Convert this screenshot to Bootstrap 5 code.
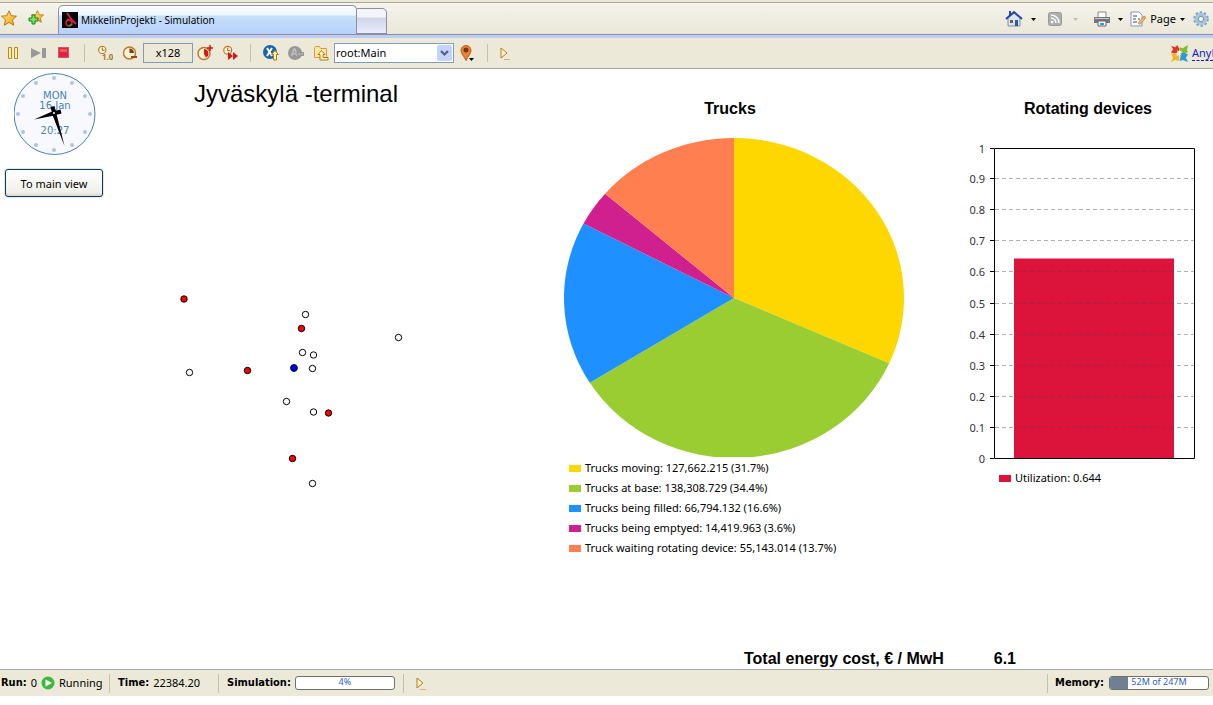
<!DOCTYPE html>
<html lang="en">
<head>
<meta charset="utf-8">
<meta name="viewport" content="width=device-width, initial-scale=1">
<title>MikkelinProjekti - Simulation</title>
<link rel="stylesheet" href="https://cdn.jsdelivr.net/npm/bootstrap@5.3.0/dist/css/bootstrap.min.css">
<style>
body{font-family:"Noto Sans","Liberation Sans",sans-serif;font-size:11px;line-height:14px;color:#000;background:#fff;padding-bottom:9px}
svg{display:block;flex:none}
button,select{font:inherit}
.icon-btn{border:0;background:none;padding:0;flex:none;color:#000}
.tabstrip{height:35px;background:linear-gradient(#ece9d8 2px,#aca899 2px,#aca899 3px,#f6f4ec 3px,#e9e7d8);border-bottom:1px solid #8d909c;overflow:hidden}
.favs{width:58px;height:32px;gap:11px;padding-left:1px;margin-top:2px}
.page-tab{width:299px;height:29px;border:1px solid #8d909c;border-bottom:0;border-radius:5px 5px 0 0;background:linear-gradient(#fbfeff 0,#eaf6fe 9px,#c5dffa 10px,#b8d0fb);padding-left:3px;gap:3px;color:#000;text-decoration:none;font-size:10px}
.blank-tab{width:30px;height:26px;border:1px solid #8d909c;border-left:0;border-radius:0 5px 0 0;background:linear-gradient(#f4f5fb 8px,#cfd6ea 9px,#e9ecfb)}
.blue-rule{height:3px;background:#bdcdf8}
.tools{height:31px;background:#ece9d8;border-bottom:1px solid #a5a5a5;padding-left:6px;overflow:hidden}
.tool-set{gap:9px}
.divider{width:1px;height:18px;background:#c5c2ac;flex:none;margin:0 12px}
.speed{width:50px;height:20px;border:1px solid #7f9db9;background:#ece9d8;text-align:center;padding:0;margin:0 -5px 0 -4px;font-size:11px}
.scope{width:120px;height:20px;margin-left:-4px;margin-right:-4px}
.scope select{appearance:none;width:100%;height:20px;border:1px solid #7f9db9;background:#fff;padding:0 20px 0 1px;border-radius:0;color:#000}
.scope svg{right:2px;top:2px;pointer-events:none}
.brand-link{width:21px;overflow:hidden;white-space:nowrap;color:#1a1ac8;text-decoration:none;border-bottom:1px dashed #1a1ac8;height:15px}
.stage{display:grid;grid-template-columns:110px 454fr 390fr 259fr;grid-template-rows:1fr auto;padding-top:4px}
.clock-face{margin-left:14px}
.xp-btn{width:98px;height:28px;border:1px solid #003c74;border-radius:3px;background:linear-gradient(#fff,#f0f0ea 85%,#dcd8cc);box-shadow:0 0 0 1px #ece9d8;color:#000;margin:14px 0 0 5px;padding:2px 0 0}
h1{font:24px/28px "Liberation Sans",sans-serif;margin:7px 0 0 84px;white-space:nowrap}
h2,.cost{font:bold 16px/20px "Liberation Sans",sans-serif;margin:0}
.site-map{margin:172px 0 0 60px}
.chart-head{padding-top:26px;text-align:center}
.pie-panel{width:340px}
.pie-panel .chart-head{padding-right:8px}
.pie{margin:19px 0 1px}
.pie-panel .legend-list{padding-left:5px}
.bar-panel .chart-head{padding-left:9px}
.bar-chart{margin:23px 0 0 12px}
.bar-panel .legend-list{padding-left:45px}
.legend-list{list-style:none;margin:0;padding:0}
.legend-list li{height:20px;display:flex;align-items:center;gap:4px;white-space:nowrap}
.swatch{width:12px;height:7px;flex:none}
.axis text{font-family:"Noto Sans",sans-serif;font-size:11px;fill:#333;text-anchor:end}
.cost{grid-column:3/5;padding-left:180px;gap:50px}
.statusbar{height:27px;background:#ece9d8;border-top:1px solid #a5a5a5;overflow:hidden;white-space:nowrap}
.status-cell{height:19px;border-right:1px solid #c5c2ac;gap:4px}
.status-cell.even{width:109px}
.status-cell.first-cell{width:110px;padding-left:1px}
.memory{height:19px;border-left:1px solid #c5c2ac;gap:5px;padding:0 4px 0 7px}
.statusbar strong{font-family:"DejaVu Sans Condensed","DejaVu Sans",sans-serif;font-size:11px}
.gauge{width:100px;height:14px;border:1px solid #707070;border-radius:3px;background:#fff;overflow:hidden;position:relative}
.gauge-fill{height:100%;background:#708090}
.gauge-text{position:absolute;inset:0;font-size:9px;line-height:10px;text-align:center;color:#2f62b8}
</style>
</head>
<body class="d-flex flex-column min-vh-100">
<svg width="0" height="0" class="position-absolute" aria-hidden="true">
<defs>
<linearGradient id="gold" x2="1" y2="1"><stop stop-color="#fff08a"/><stop offset="1" stop-color="#f09a10"/></linearGradient>
<symbol id="star" viewBox="0 0 16 16"><path d="M8 .8l2.200 4.900 5.300.5-4 3.600 1.200 5.400L8 12.400l-4.700 2.800 1.200-5.400-4-3.600 5.300-.5z" fill="url(#gold)" stroke="#b87818"/></symbol>
<symbol id="caret" viewBox="0 0 5 3"><path d="M0 0h5L2.500 3z"/></symbol>
<symbol id="console" viewBox="0 0 10 13"><path d="M1 1l6 5-6 5z" fill="#fff4c8" stroke="#b87a20"/><path d="M4.500 12.500h5" stroke="#b87a20" stroke-dasharray="1 1"/></symbol>
<symbol id="dial" viewBox="0 0 16 16"><circle cx="6.500" cy="6" r="4.500" fill="#fff3d0" stroke="#b5772a" stroke-width="1.300"/><path d="M6.500 3v3.500h3" fill="none" stroke="#7c4a20"/></symbol>
</defs>
</svg>

<header>
<div class="tabstrip d-flex">
  <div class="favs d-flex align-items-center">
    <button class="icon-btn" aria-label="Favorites"><svg width="16" height="16"><use href="#star"/></svg></button>
    <button class="icon-btn" aria-label="Add to favorites"><svg width="16" height="16" viewBox="0 0 16 16"><use href="#star" x="3" y="0" width="13" height="13"/><path d="M4 5h3v3h3v3H7v3H4v-3H1V8h3z" fill="#7be05a" stroke="#16851c"/></svg></button>
  </div>
  <a href="#" class="page-tab d-flex align-items-center mt-auto">
    <svg width="16" height="16" viewBox="0 0 16 16"><path d="M0 0h16v16H0z"/><path d="M5 1l5 7 4 4M9 9L5 7" fill="none" stroke="#e0205a" stroke-width="1.800"/><circle cx="7" cy="11" r="3" fill="none" stroke="#d42020" stroke-width="1.500"/><path d="M7 14l3-2" stroke="#30b030" stroke-width="1.500"/></svg>
    <span>MikkelinProjekti - Simulation</span>
  </a>
  <button class="blank-tab mt-auto p-0" aria-label="New tab"></button>
  <nav class="d-flex align-items-center ms-auto pt-1" aria-label="Browser commands">
    <button class="icon-btn d-flex align-items-center" aria-label="Home"><svg width="18" height="18" viewBox="0 0 18 18"><path d="M3 8v8h12V8L9 3z" fill="#dce4ee" stroke="#8090a8"/><path d="M1 9l8-7 8 7" fill="none" stroke="#2448a8" stroke-width="2"/><path d="M4 1h2v4H4z" fill="#2448a8"/><path d="M10 10h3v6h-3z" fill="#245cb0"/><path d="M5 10h3v3H5z" fill="#805848"/></svg><svg class="ms-2" width="5" height="3"><use href="#caret"/></svg></button>
    <button class="icon-btn d-flex align-items-center ms-2 ps-1" aria-label="Feeds"><svg width="14" height="14" viewBox="0 0 14 14"><rect x=".5" y=".5" width="13" height="13" rx="2" fill="#aeaead" stroke="#9a9a98"/><circle cx="4" cy="10" r="1.300" fill="#fff"/><path d="M3 6a5 5 0 0 1 5 5M3 3a8 8 0 0 1 8 8" fill="none" stroke="#fff" stroke-width="1.400"/></svg><svg class="ms-2 me-1" width="8" height="3" fill="#bbb"><use href="#caret" width="5" x="3"/></svg></button>
    <button class="icon-btn d-flex align-items-center ms-2 ps-1" aria-label="Print"><svg width="16" height="16" viewBox="0 0 16 16"><path d="M4 1h8v6H4z" fill="#fff" stroke="#888"/><path d="M0 6h16v6H0z" fill="#77777c"/><path d="M1 7h14v1H1z" fill="#c8c8c8"/><path d="M4 10h8v5H4z" fill="#f4f8ff" stroke="#666"/><path d="M6 12h4v2H6z" fill="#3a9ad0"/></svg><svg class="ms-2" width="8" height="3"><use href="#caret" width="5"/></svg></button>
    <button class="icon-btn d-flex align-items-center ms-1"><svg width="16" height="16" viewBox="0 0 16 16"><path d="M1 1h8l3 3v11H1z" fill="#fff" stroke="#8898b8"/><path d="M3 5h4M3 8h3M3 11h4M8 8h2" stroke="#334a90"/><path d="M8 12l6-7 2 1.500-6 7z" fill="#f0b860" stroke="#a06828" stroke-width=".6"/></svg><span class="mx-1">Page</span><svg width="5" height="3"><use href="#caret"/></svg></button>
    <button class="icon-btn ms-2 me-1" aria-label="Tools"><svg width="16" height="16" viewBox="0 0 16 16"><circle cx="8" cy="8" r="6.500" fill="none" stroke="#7da0bf" stroke-width="2.500" stroke-dasharray="2.300 1.784"/><circle cx="8" cy="8" r="4.500" fill="none" stroke="#a8c4dc" stroke-width="3.500"/><circle cx="8" cy="8" r="2.700" fill="#f2f2ea" stroke="#6f93b4"/></svg></button>
  </nav>
</div>
<div class="blue-rule"></div>

<div class="tools d-flex align-items-center">
  <div class="tool-set d-flex align-items-center">
    <button class="icon-btn" aria-label="Pause"><svg width="16" height="16" viewBox="0 0 16 16"><path d="M2.500 2.500h3v11h-3zM8.500 2.500h3v11h-3z" fill="#ffefa0" stroke="#b98a20"/></svg></button>
    <button class="icon-btn" aria-label="Step"><svg width="16" height="16" viewBox="0 0 16 16"><path d="M0 3l10 5-10 5zM11 3h4v10h-4z" fill="#999"/></svg></button>
    <button class="icon-btn" aria-label="Stop"><svg width="16" height="16" viewBox="0 0 16 16"><rect x="2.500" y="2.500" width="10" height="10" fill="#e82038" stroke="#c06060"/><path d="M4 4h7v3H4z" fill="#f05868"/></svg></button>
  </div>
  <span class="divider"></span>
  <div class="tool-set d-flex align-items-center">
    <button class="icon-btn" aria-label="Real time"><svg width="16" height="16" viewBox="0 0 16 16"><use href="#dial" x="0" y="0" width="13" height="13"/><text x="5" y="15" font-size="8" font-weight="bold" fill="#a87828">1.0</text></svg></button>
    <button class="icon-btn" aria-label="Slow down"><svg width="16" height="16" viewBox="0 0 16 16"><circle cx="7.500" cy="8" r="6" fill="#fff3d0" stroke="#b5772a" stroke-width="1.400"/><path d="M7.500 8V3.500A4.500 4.500 0 0 1 12 8z" fill="#7c3a20"/><path d="M9 12h6" stroke="#a04020" stroke-width="2"/></svg></button>
    <output class="speed d-flex align-items-center justify-content-center">x128</output>
    <button class="icon-btn" aria-label="Speed up"><svg width="16" height="16" viewBox="0 0 16 16"><circle cx="7" cy="8.500" r="6" fill="#fff3d0" stroke="#b5772a" stroke-width="1.400"/><path d="M7 4a4.500 4.500 0 0 1 2 8.500L7 9z" fill="#d81818"/><path d="M10 3h6M13 0v6" stroke="#d01010" stroke-width="1.500"/></svg></button>
    <button class="icon-btn" aria-label="Virtual time"><svg width="16" height="16" viewBox="0 0 16 16"><use href="#dial" width="14" height="14"/><path d="M6 7l5 4-5 4zM11 7l5 4-5 4z" fill="#d01818"/></svg></button>
  </div>
  <span class="divider"></span>
  <div class="tool-set d-flex align-items-center">
    <button class="icon-btn" aria-label="Experiment root"><svg width="16" height="16" viewBox="0 0 16 16"><circle cx="7" cy="7" r="7" fill="#1d62ad"/><path d="M4 3l5 8M9 3l-5 8" stroke="#fff" stroke-width="2"/><path d="M12 5.500l3.500 4h-2V15h-3V9.500h-2z" fill="#fff2b0" stroke="#b07818"/></svg></button>
    <button class="icon-btn" aria-label="Back"><svg width="16" height="16" viewBox="0 0 16 16"><circle cx="7" cy="8" r="7" fill="#999"/><path d="M3.500 11L6 4h1l2 7M4.500 9h3" fill="none" stroke="#c4c4c4" stroke-width="1.300"/><path d="M8.500 9L12 5.500v2h4v3h-4v2z" fill="#aaa" stroke="#888" stroke-width=".7"/></svg></button>
    <button class="icon-btn" aria-label="Up one level"><svg width="16" height="16" viewBox="0 0 16 16"><path d="M1.500 12.500v-10l1-1h4l1 2h6v9z" fill="#fbe6a2" stroke="#cf9c48"/><path d="M8.500 5.500l3.500 4h-2v3h5v2.500H7V9.500H5z" fill="#fff6c8" stroke="#b07818"/></svg></button>
    <div class="scope position-relative"><select aria-label="Current object"><option>root:Main</option></select><svg class="position-absolute" width="15" height="16" viewBox="0 0 15 16"><rect width="15" height="16" rx="2" fill="#c3d3fd"/><path d="M4 6l3.500 3.500L11 6" fill="none" stroke="#4d6185" stroke-width="2.200"/></svg></div>
    <button class="icon-btn" aria-label="Navigate to area"><svg width="16" height="18" viewBox="0 0 16 18"><path d="M7 16.500C5 12 2 9.500 2 6.500a5 5 0 0 1 10 0c0 3-3 5.500-5 10z" fill="#ee8230" stroke="#b65c1c"/><circle cx="7" cy="6" r="2.500" fill="#703818"/><path d="M10 14h5l-2.500 3z"/></svg></button>
  </div>
  <span class="divider"></span>
  <button class="icon-btn" aria-label="Developer panel"><svg width="10" height="13"><use href="#console"/></svg></button>
  <div class="d-flex align-items-center ms-auto">
    <svg width="17" height="17" viewBox="0 0 16 16" aria-hidden="true"><path d="M0 1l4 1 2-2 2 4-1 3-4 1-3-1 2-3z" fill="#e43428"/><path d="M8 2l3 1 5-3-1 5 1 2-4 1-4-3z" fill="#7cc030"/><path d="M8 8l4-1 4 2-2 3 2 4-5-2-3 1 1-4z" fill="#2c9ad4"/><path d="M0 9l4-1 4 3-1 4-3-1-4 2 2-4z" fill="#f6b424"/><path d="M6 5l2 1 2-1-1 3 1 2-2-1-3 1 1-2z" fill="#fff4e0"/></svg>
    <a href="#" class="brand-link ms-1">AnyLogic</a>
  </div>
</div>
</header>

<main class="stage flex-grow-1">
  <aside>
    <svg class="clock-face" width="82" height="82" viewBox="14 72 82 82" role="img" aria-label="Clock">
      <circle cx="54.500" cy="113" r="40.500" fill="#f8f8ff" stroke="#4682b4"/>
      <g fill="#b0c4de"><circle cx="54" cy="77" r="2"/><circle cx="72" cy="82" r="2"/><circle cx="85" cy="95" r="2"/><circle cx="90" cy="113" r="2"/><circle cx="85" cy="131" r="2"/><circle cx="72" cy="144" r="2"/><circle cx="54" cy="149" r="2"/><circle cx="36" cy="144" r="2"/><circle cx="23" cy="131" r="2"/><circle cx="18" cy="113" r="2"/><circle cx="23" cy="95" r="2"/><circle cx="36" cy="82" r="2"/></g>
      <g font-family="DejaVu Sans, sans-serif" font-size="10" fill="#4682b4" text-anchor="middle"><text x="55" y="98">MON</text><text x="55" y="108">16 Jan</text><text x="55" y="133">20:27</text></g>
      <path d="M34 118.500l17-7.500 9.500-2.500 1 4-9.500 2.500zM64.500 145l-12-31-2-8 4-1 2 8z"/><circle cx="54" cy="112" r="1" fill="#fff"/>
    </svg>
    <button class="xp-btn">To main view</button>
  </aside>

  <section>
    <h1>Jyväskylä -terminal</h1>
    <svg width="250" height="220" viewBox="170 280 250 220" class="site-map" role="img" aria-label="Truck positions">
      <g fill="#fff" stroke="#000"><circle cx="305.500" cy="314.500" r="3.200"/><circle cx="398.500" cy="337.500" r="3.200"/><circle cx="302.500" cy="352.500" r="3.200"/><circle cx="313.500" cy="355" r="3.200"/><circle cx="312.500" cy="368.500" r="3.200"/><circle cx="189.500" cy="372.500" r="3.200"/><circle cx="286.500" cy="401.500" r="3.200"/><circle cx="313.500" cy="412" r="3.200"/><circle cx="312.500" cy="483.500" r="3.200"/>
      <g fill="#f00"><circle cx="184" cy="299" r="3.200"/><circle cx="301.500" cy="328.500" r="3.200"/><circle cx="247.500" cy="370.500" r="3.200"/><circle cx="328.500" cy="413" r="3.200"/><circle cx="292.500" cy="458.500" r="3.200"/></g><circle cx="294" cy="368" r="3.400" fill="#00f"/></g>
    </svg>
  </section>

  <section class="pie-panel">
    <div class="chart-head"><h2>Trucks</h2></div>
    <svg class="pie" width="340" height="319" viewBox="564 138 340 319" role="img" aria-label="Trucks by state">
      <path d="M734 298V138A170 160 0 0 1 889.200 363.300z" fill="#ffd700"/>
      <path d="M734 298L889.200 363.300A170 160 0 0 1 589.800 382.800z" fill="#9acd32"/>
      <path d="M734 298L589.800 382.800A170 160 0 0 1 583.500 223.600z" fill="#1e90ff"/>
      <path d="M734 298L583.500 223.600A170 160 0 0 1 605.100 193.700z" fill="#d02090"/>
      <path d="M734 298L605.100 193.700A170 160 0 0 1 734 138z" fill="#ff7f50"/>
    </svg>
    <ul class="legend-list">
      <li><span class="swatch" style="background:#ffd700"></span>Trucks moving: 127,662.215 (31.7%)</li>
      <li><span class="swatch" style="background:#9acd32"></span>Trucks at base: 138,308.729 (34.4%)</li>
      <li><span class="swatch" style="background:#1e90ff"></span>Trucks being filled: 66,794.132 (16.6%)</li>
      <li><span class="swatch" style="background:#d02090"></span>Trucks being emptyed: 14,419.963 (3.6%)</li>
      <li><span class="swatch" style="background:#ff7f50"></span>Truck waiting rotating device: 55,143.014 (13.7%)</li>
    </ul>
  </section>

  <section class="bar-panel">
    <div class="chart-head"><h2>Rotating devices</h2></div>
    <svg class="axis bar-chart" width="230" height="326" viewBox="966 142 230 326" role="img" aria-label="Utilization of rotating devices">
      <path d="M1014 258.500h160V458h-160z" fill="#dc143c"/>
      <path d="M995 178.500h199M995 209.500h199M995 240.500h199M995 271.500h199M995 303.500h199M995 334.500h199M995 365.500h199M995 396.500h199M995 427.500h199" stroke="#444" stroke-opacity=".42" stroke-dasharray="4 3"/>
      <path d="M994.500 148.500h200v310h-200zM990 148.500h4M990 178.500h4M990 209.500h4M990 240.500h4M990 271.500h4M990 303.500h4M990 334.500h4M990 365.500h4M990 396.500h4M990 427.500h4M990 458.500h4" fill="none" stroke="#000"/>
      <text x="985" y="153">1</text><text x="985" y="183">0.9</text><text x="985" y="214">0.8</text><text x="985" y="245">0.7</text><text x="985" y="276">0.6</text><text x="985" y="308">0.5</text><text x="985" y="339">0.4</text><text x="985" y="370">0.3</text><text x="985" y="401">0.2</text><text x="985" y="432">0.1</text><text x="985" y="463">0</text>
    </svg>
    <ul class="legend-list"><li><span class="swatch" style="background:#dc143c"></span>Utilization: 0.644</li></ul>
  </section>

  <div class="cost d-flex"><span>Total energy cost, € / MwH</span><output>6.1</output></div>
</main>

<footer class="statusbar d-flex align-items-center">
  <div class="status-cell first-cell d-flex align-items-center"><strong>Run:</strong><span>0</span><svg width="14" height="14" viewBox="0 0 14 14"><circle cx="7" cy="7" r="6.500" fill="#3cb83c"/><path d="M4.500 3.500L11 7l-6.500 3.500z" fill="#fff"/></svg><span>Running</span></div>
  <div class="status-cell even d-flex align-items-center ps-2"><strong>Time:</strong><span>22384.20</span></div>
  <div class="status-cell d-flex align-items-center ps-2 pe-2"><strong>Simulation:</strong><div class="gauge" role="progressbar" aria-label="Simulation" aria-valuenow="4" aria-valuemin="0" aria-valuemax="100"><span class="gauge-text">4%</span></div></div>
  <button class="icon-btn ms-2 ps-1" aria-label="Developer panel"><svg width="10" height="13"><use href="#console"/></svg></button>
  <div class="d-flex align-items-center ms-auto memory"><strong>Memory:</strong><div class="gauge" role="progressbar" aria-label="Memory" aria-valuenow="52" aria-valuemin="0" aria-valuemax="247"><div class="gauge-fill" style="width:18%"></div><span class="gauge-text">52M of 247M</span></div></div>
</footer>
<script src="https://cdn.jsdelivr.net/npm/bootstrap@5.3.0/dist/js/bootstrap.bundle.min.js"></script>
</body>
</html>
